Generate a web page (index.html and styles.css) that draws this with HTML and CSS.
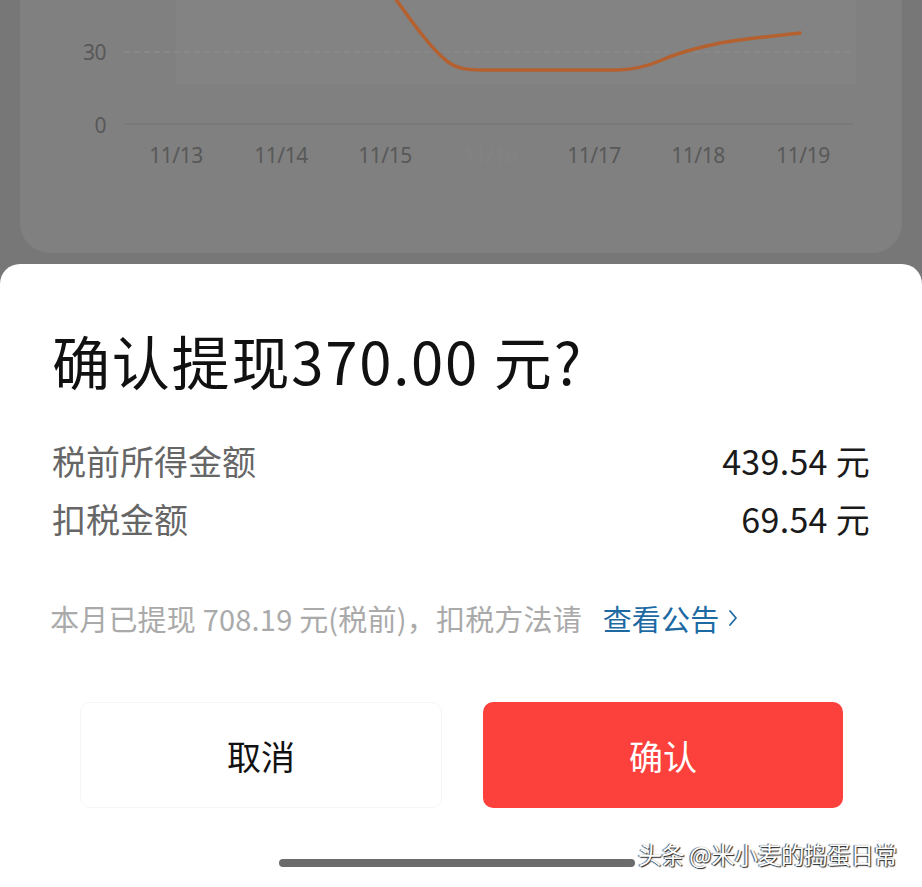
FILE: index.html
```html
<!DOCTYPE html>
<html>
<head>
    <title>确认提现</title>
    <link rel="stylesheet" href="styles.css">
</head>
<body>
    <div class="page">
        <div class="chart-card">
            <svg class="chart" width="882" height="253" viewBox="0 0 882 253">
                <rect x="156" y="0" width="680" height="84" fill="#ffffff" fill-opacity="0.025"/>
                <line x1="104" y1="52" x2="833" y2="52" stroke="#8a8a8a" stroke-width="1.5" stroke-dasharray="6 4"/>
                <line x1="104" y1="90" x2="833" y2="90" stroke="#868686" stroke-width="1" stroke-dasharray="3 5"/>
                <line x1="104" y1="124" x2="833" y2="124" stroke="#787878" stroke-width="1.5"/>
                <text class="axis" x="86" y="60" text-anchor="end">30</text>
                <text class="axis" x="86" y="133" text-anchor="end">0</text>
                <path d="M375 -2 C392 22 412 50 428 62 C438 69 448 70 462 70 L596 70 C614 70 628 66 642 60 C660 52 676 48 700 43 C730 38 755 36 780 33"
                      fill="none" stroke="#b4602f" stroke-width="3.5" stroke-linecap="round"/>
                <text class="axis" x="156" y="163" text-anchor="middle">11/13</text>
                <text class="axis" x="261" y="163" text-anchor="middle">11/14</text>
                <text class="axis" x="365" y="163" text-anchor="middle">11/15</text>
                <text class="axis faint" x="470" y="163" text-anchor="middle">11/16</text>
                <text class="axis" x="574" y="163" text-anchor="middle">11/17</text>
                <text class="axis" x="678" y="163" text-anchor="middle">11/18</text>
                <text class="axis" x="783" y="163" text-anchor="middle">11/19</text>
            </svg>
        </div>
    </div>

    <div class="sheet">
        <h1 class="title">确认提现370.00 元?</h1>

        <div class="row">
            <span class="row-label">税前所得金额</span>
            <span class="row-value">439.54 元</span>
        </div>
        <div class="row">
            <span class="row-label">扣税金额</span>
            <span class="row-value">69.54 元</span>
        </div>

        <p class="notice">
            本月已提现 708.19 元(税前)，扣税方法请
            <a class="notice-link" href="#">查看公告<svg class="chevron" width="12" height="18" viewBox="0 0 12 18">
                    <path d="M3 2 L9 9 L3 16" fill="none" stroke="#1d6aa3" stroke-width="1.8" stroke-linecap="round" stroke-linejoin="round"/>
                </svg></a>
        </p>

        <div class="actions">
            <button class="btn btn-cancel">取消</button>
            <button class="btn btn-confirm">确认</button>
        </div>

        <div class="home-bar"></div>
    </div>

    <div class="watermark">头条 @米小麦的捣蛋日常</div>
</body>
</html>
```

FILE: styles.css
```css
body { margin: 0; background: #777777; font-family: "Noto Sans CJK SC", "Noto Sans", sans-serif; overflow: hidden; }
.page { height: 264px; padding: 0 20px; box-sizing: border-box; }
.chart-card { height: 253px; background: #808080; border-radius: 0 0 30px 30px; }
.chart { display: block; }
.axis { font-family: "Noto Sans", sans-serif; font-size: 21px; fill: #585858; letter-spacing: -0.5px; }
.axis.faint { fill: #838383; }

.sheet { background: #fff; border-radius: 20px 20px 0 0; height: 623px; padding: 61px 52px 0; box-sizing: border-box; display: flex; flex-direction: column; }
.title { margin: 0 0 36px; font-size: 58px; font-weight: 400; line-height: 70px; color: #111; letter-spacing: 1.8px; }
.row { display: flex; justify-content: space-between; align-items: center; height: 58px; font-size: 34px; }
.row-label { color: #666; }
.row-value { color: #1a1a1a; letter-spacing: 0.3px; }

.notice { margin: 51px 0 0 -2px; font-size: 29px; line-height: 40px; color: #aaaaaa; white-space: nowrap; letter-spacing: 0.2px; }
.notice-link { color: #1d6aa3; text-decoration: none; margin-left: 14px; }
.chevron { vertical-align: 4px; margin-left: 8px; }

.actions { display: flex; gap: 41px; margin: 64px 27px 0 28px; }
.btn { flex: 1; height: 106px; border-radius: 10px; font-family: "Noto Sans CJK SC", sans-serif; font-size: 34px; cursor: pointer; }
.btn-cancel { background: #fff; border: 1px solid #f6f6f6; color: #111; }
.btn-confirm { background: #fc413d; border: none; color: #fff; }

.home-bar { width: 356px; height: 8px; border-radius: 4px; background: #6b6b6b; margin: 51px 0 0 227px; }

.watermark { position: absolute; left: 638px; top: 838px; font-size: 23.5px; line-height: 32px; color: #fff; letter-spacing: -0.3px; text-shadow: 1px 1px 1px #222, -1px 0 1px #444; }
```
